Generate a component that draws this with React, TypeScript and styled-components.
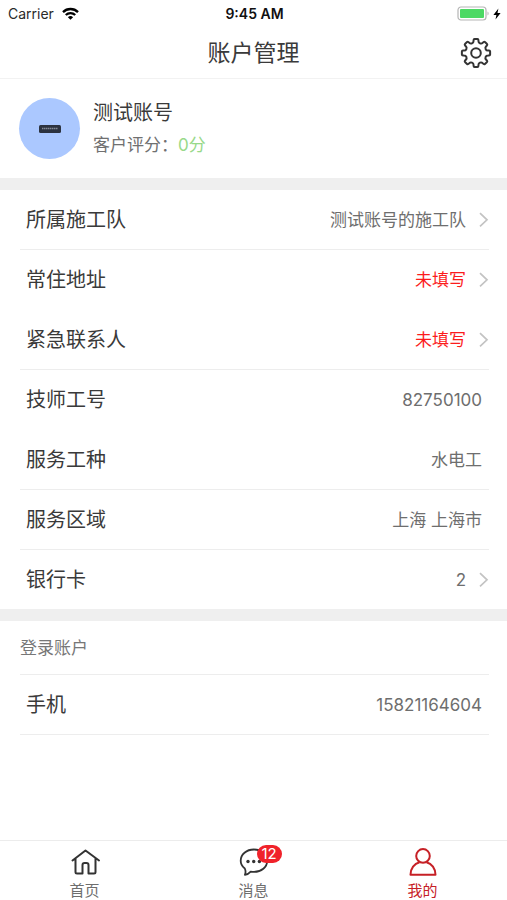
import React from 'react';
import styled, { createGlobalStyle, css } from 'styled-components';

const GlobalStyle = createGlobalStyle`
  *, *::before, *::after { box-sizing: border-box; }
  body {
    margin: 0;
    background: #fff;
    color: #3a3a3a;
    font-family: Inter, "Noto Sans CJK SC", sans-serif;
  }
  button { font: inherit; color: inherit; }
`;

const Screen = styled.div`
  min-height: 100vh;
  display: flex;
  flex-direction: column;
  background: #fff;
`;

const StatusBar = styled.div`
  display: grid;
  grid-template-columns: 1fr auto 1fr;
  align-items: center;
  height: 27px;
  padding: 0 6px 0 8px;
  font-size: 14px;
  line-height: 18px;
  color: #111;
`;

const Carrier = styled.span`
  display: flex;
  align-items: center;
  gap: 8px;
  color: #2a2a2a;
`;

const Clock = styled.time`
  font-weight: 600;
`;

const Power = styled.span`
  display: flex;
  justify-content: flex-end;
  align-items: center;
  gap: 3px;
`;

const Header = styled.header`
  display: grid;
  grid-template-columns: 1fr auto 1fr;
  align-items: center;
  height: 52px;
  padding: 0 15px;
  border-bottom: 1px solid #f2f2f2;
`;

const Title = styled.h1`
  grid-column: 2;
  margin: 0;
  font-size: 23px;
  font-weight: 400;
  line-height: 32px;
`;

const IconButton = styled.button`
  justify-self: end;
  display: flex;
  padding: 0;
  border: 0;
  background: none;
  cursor: pointer;
`;

const Profile = styled.section`
  display: flex;
  align-items: center;
  gap: 13px;
  height: 99px;
  padding: 0 19px;
`;

const Avatar = styled.div`
  display: grid;
  place-items: center;
  width: 61px;
  height: 61px;
  border-radius: 50%;
  background: #abc8ff;
`;

const ProfileText = styled.div`
  display: flex;
  flex-direction: column;
  gap: 4px;
`;

const Name = styled.p`
  margin: 0;
  font-size: 20px;
  line-height: 28px;
`;

const Rating = styled.p`
  margin: 0;
  font-size: 17px;
  line-height: 28px;
  color: #707070;
`;

const Score = styled.span`
  color: #98d98a;
`;

const Band = styled.div`
  height: 12px;
  background: #efefef;
`;

const List = styled.ul`
  margin: 0;
  padding: 0 18px 0 20px;
  list-style: none;
`;

const Item = styled.li<{ $divided?: boolean }>`
  height: ${(p) => (p.$divided ? 60 : 59)}px;
  border-bottom: ${(p) => (p.$divided ? '1px solid #ededed' : 'none')};

  &:not(:last-child) {
    height: 60px;
  }
`;

const rowLayout = css`
  display: flex;
  align-items: center;
  width: 100%;
  height: 59px;
  padding: 0 0 0 6px;
  border: 0;
  background: none;
  text-align: left;
`;

const Row = styled.div`
  ${rowLayout}
`;

const RowButton = styled.button`
  ${rowLayout}
  cursor: pointer;
`;

const Label = styled.span`
  flex: 1;
  font-size: 20px;
  line-height: 28px;
`;

const Value = styled.span<{ $missing?: boolean; $link?: boolean }>`
  margin-right: ${(p) => (p.$link ? 13 : 7)}px;
  font-size: 17px;
  line-height: 24px;
  color: ${(p) => (p.$missing ? '#fb1c1c' : '#6e6e6e')};
`;

const SectionTitle = styled.h2`
  display: flex;
  align-items: center;
  height: 54px;
  margin: 0 18px 0 20px;
  border-bottom: 1px solid #ededed;
  font-size: 17px;
  font-weight: 400;
  line-height: 24px;
  color: #777;
`;

const TabBar = styled.nav`
  display: grid;
  grid-template-columns: repeat(3, 1fr);
  height: 60px;
  margin-top: auto;
  border-top: 1px solid #ececec;
`;

const Tab = styled.a<{ $active?: boolean }>`
  display: flex;
  flex-direction: column;
  align-items: center;
  padding-top: 6px;
  font-size: 15px;
  line-height: 20px;
  color: ${(p) => (p.$active ? '#c62026' : '#6e6e6e')};
  text-decoration: none;
`;

const TabIcon = styled.span`
  position: relative;
  display: flex;
  width: 32px;
  height: 32px;
  margin-bottom: 2px;
`;

const Badge = styled.span`
  position: absolute;
  top: -2px;
  left: 19px;
  padding: 0 5px;
  border-radius: 9px;
  background: #f0222a;
  color: #fff;
  font-size: 15px;
  line-height: 18px;
`;

const WifiIcon = () => (
  <svg width="17" height="13" viewBox="0 0 17 13" aria-hidden="true">
    <g fill="none" stroke="#000" strokeWidth="2.3">
      <path d="M1 5.1a10.6 10.6 0 0 1 15 0" />
      <path d="M3.8 8a6.7 6.7 0 0 1 9.4 0" />
    </g>
    <path d="M8.5 12.8 5.9 10.2a3.7 3.7 0 0 1 5.2 0z" />
  </svg>
);

const BatteryIcon = () => (
  <svg width="33" height="15" viewBox="0 0 33 15" aria-hidden="true">
    <rect x="1" y="1" width="28" height="13" rx="3" fill="none" stroke="#b5b5b5" strokeWidth="1.2" />
    <rect x="3" y="3" width="24" height="9" rx="1" fill="#4cd964" />
    <path d="M30.5 5.5c1.5.5 1.5 3.5 0 4z" fill="#b5b5b5" />
  </svg>
);

const BoltIcon = () => (
  <svg width="8" height="12" viewBox="0 0 8 12" aria-hidden="true">
    <path d="M5.4.4.4 7h3l-.9 4.6L7.600 5H4.500z" />
  </svg>
);

const toothAngles = [0, 45, 90, 135, 180, 225, 270, 315];

const gearPath =
  toothAngles
    .map((deg, i) => {
      const at = (r: number, offset: number) => {
        const a = ((deg + offset - 90) * Math.PI) / 180;
        return `${(16 + r * Math.cos(a)).toFixed(2)} ${(16 + r * Math.sin(a)).toFixed(2)}`;
      };
      return `${i ? 'L' : 'M'}${at(12.2, -11.5)}L${at(13.2, -10.5)}Q${at(14.3, -9.5)} ${at(14.2, -6)}L${at(14.2, 6)}Q${at(14.3, 9.5)} ${at(13.2, 10.5)}L${at(12.2, 11.5)}C${at(10, 14)} ${at(10, 31)} ${at(12.2, 33.5)}`;
    })
    .join('') + 'Z';

const GearIcon = () => (
  <svg width="32" height="32" viewBox="0 0 32 32" fill="none" stroke="#333" strokeWidth="2" strokeLinejoin="round" aria-hidden="true">
    <path d={gearPath} />
    <circle cx="16" cy="16" r="4.8" />
  </svg>
);

const DeviceIcon = () => (
  <svg width="24" height="10" viewBox="0 0 24 10" aria-hidden="true">
    <rect x="1" y="1" width="22" height="8" rx="1.5" fill="#2c3340" />
    <path d="M4 4.5h16" stroke="#858b96" strokeWidth="1.4" strokeDasharray="1.5 .5" />
  </svg>
);

const Chevron = () => (
  <svg width="10" height="16" viewBox="0 0 10 16" fill="none" stroke="#c3c3c3" strokeWidth="1.7" aria-hidden="true">
    <path d="m1 1.2 7 6.6-7 6.600" />
  </svg>
);

const HomeIcon = () => (
  <svg width="32" height="32" viewBox="0 0 32 32" fill="none" stroke="#333" strokeWidth="2" strokeLinecap="round" strokeLinejoin="round" aria-hidden="true">
    <path d="M3.500 13.500 16.500 3.500l13.500 10M6.500 11.500V25q0 1.500 1.500 1.500h5.500V18q0-2 2-2h2q2 0 2 2v8.500H25q1.500 0 1.500-1.500V11.500" />
  </svg>
);

const ChatIcon = () => (
  <svg width="32" height="32" viewBox="0 0 32 32" aria-hidden="true">
    <path d="M6.800 21.500C4.200 19.500 2.700 16.800 2.700 13.700 2.700 7.300 8.500 2.500 15.900 2.500s13.300 4.800 13.300 11.200-5.900 11.200-13.300 11.200c-1.100 0-2.200-.1-3.200-.3-1.600 1.800-3.400 2.800-5.800 3.200.9-2 .9-4-.1-6.300z" fill="none" stroke="#333" strokeWidth="1.800" strokeLinejoin="round" />
    <g fill="#333">
      <circle cx="10" cy="14.500" r="1.700" />
      <circle cx="15.700" cy="14.500" r="1.700" />
      <circle cx="21.400" cy="14.500" r="1.700" />
    </g>
  </svg>
);

const PersonIcon = () => (
  <svg width="32" height="32" viewBox="0 0 32 32" fill="none" stroke="#c62026" strokeWidth="2" strokeLinejoin="round" aria-hidden="true">
    <circle cx="16" cy="8.900" r="6.800" />
    <path d="M12.500 15.200C7.300 16.500 3.500 21.500 3.500 27.800h25c0-6.300-3.800-11.300-9-12.600" />
  </svg>
);

type Entry = { label: string; value: string; missing?: boolean; link?: boolean; divided?: boolean };

const entries: Entry[] = [
  { label: '所属施工队', value: '测试账号的施工队', link: true, divided: true },
  { label: '常住地址', value: '未填写', missing: true, link: true },
  { label: '紧急联系人', value: '未填写', missing: true, link: true, divided: true },
  { label: '技师工号', value: '82750100' },
  { label: '服务工种', value: '水电工', divided: true },
  { label: '服务区域', value: '上海 上海市', divided: true },
  { label: '银行卡', value: '2', link: true },
];

const EntryItem = ({ label, value, missing, link, divided }: Entry) => {
  const content = (
    <>
      <Label>{label}</Label>
      <Value $missing={missing} $link={link}>{value}</Value>
      {link && <Chevron />}
    </>
  );
  return (
    <Item $divided={divided}>
      {link ? <RowButton type="button">{content}</RowButton> : <Row>{content}</Row>}
    </Item>
  );
};

export default function App() {
  return (
    <Screen>
      <GlobalStyle />
      <StatusBar>
        <Carrier>Carrier <WifiIcon /></Carrier>
        <Clock>9:45 AM</Clock>
        <Power><BatteryIcon /><BoltIcon /></Power>
      </StatusBar>
      <Header>
        <Title>账户管理</Title>
        <IconButton type="button" aria-label="设置"><GearIcon /></IconButton>
      </Header>
      <main>
        <Profile>
          <Avatar><DeviceIcon /></Avatar>
          <ProfileText>
            <Name>测试账号</Name>
            <Rating>客户评分：<Score>0分</Score></Rating>
          </ProfileText>
        </Profile>
        <Band />
        <List>
          {entries.map((entry) => <EntryItem key={entry.label} {...entry} />)}
        </List>
        <Band />
        <SectionTitle>登录账户</SectionTitle>
        <List>
          <EntryItem label="手机" value="15821164604" divided />
        </List>
      </main>
      <TabBar>
        <Tab href="#home"><TabIcon><HomeIcon /></TabIcon>首页</Tab>
        <Tab href="#messages"><TabIcon><ChatIcon /><Badge>12</Badge></TabIcon>消息</Tab>
        <Tab href="#mine" $active aria-current="page"><TabIcon><PersonIcon /></TabIcon>我的</Tab>
      </TabBar>
    </Screen>
  );
}
